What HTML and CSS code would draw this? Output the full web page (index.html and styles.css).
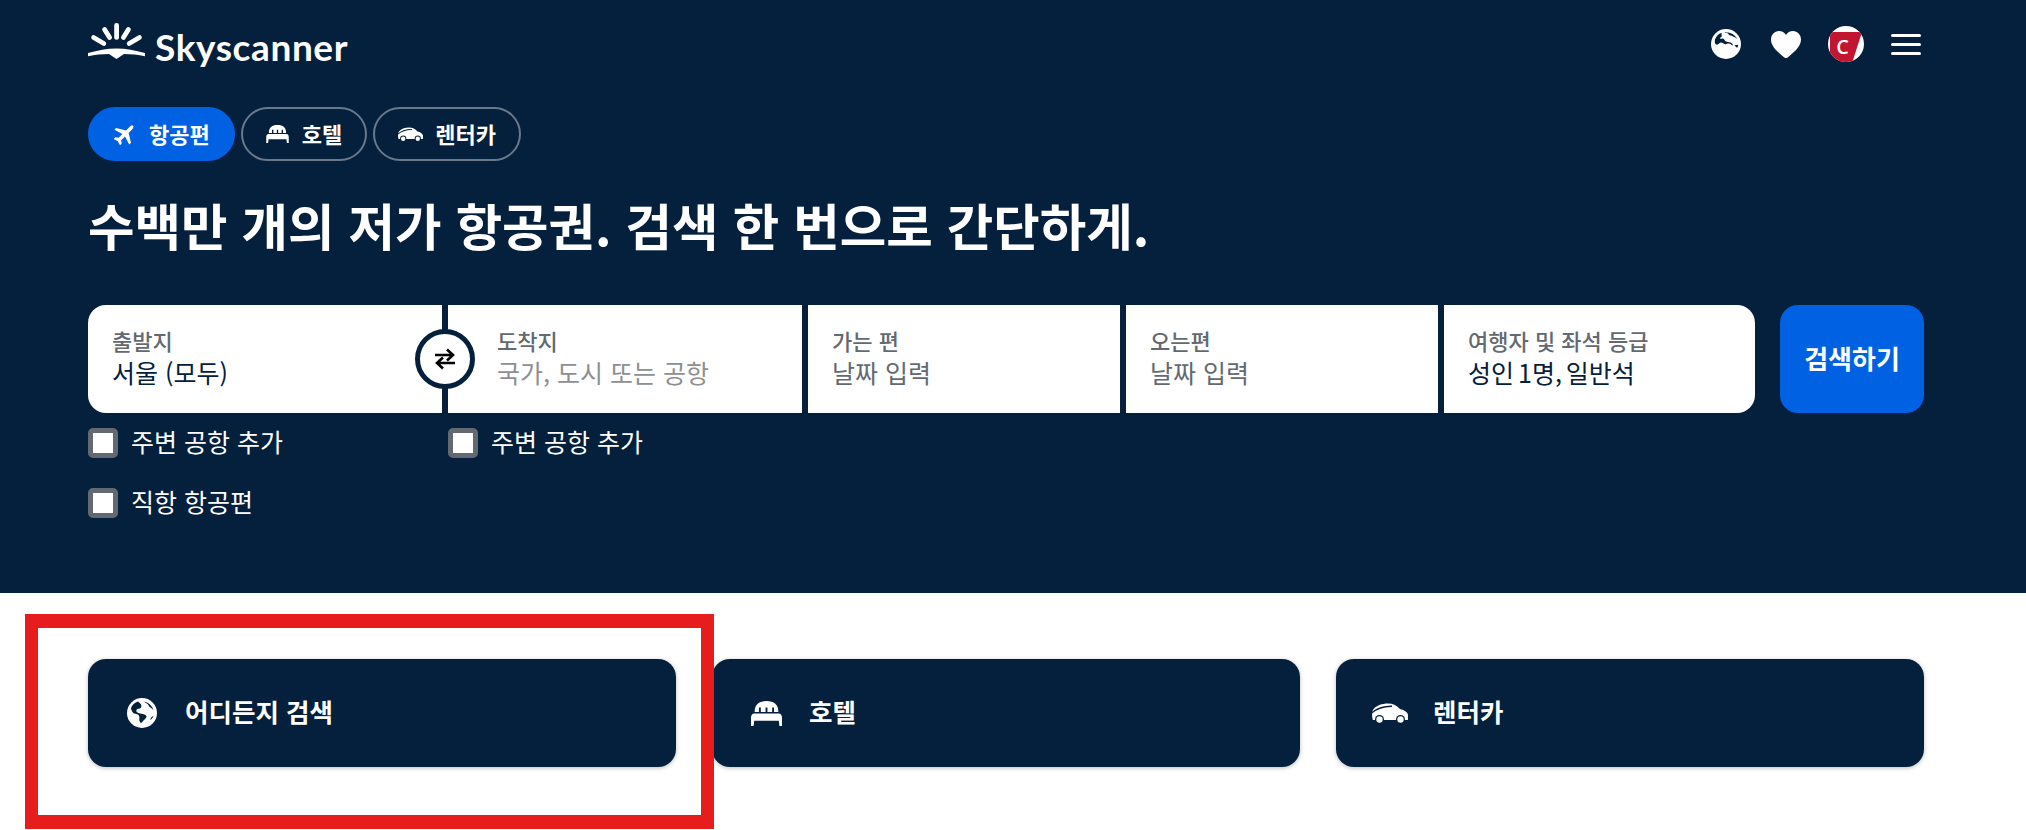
FILE: index.html
```html
<!DOCTYPE html>
<html lang="ko">
<head>
    <meta charset="utf-8">
    <title>Skyscanner</title>
    <link rel="stylesheet" href="styles.css">
</head>
<body>
    <svg class="defs" width="0" height="0" aria-hidden="true">
        <symbol id="globe" viewBox="0 0 30 30">
            <circle cx="15" cy="15" r="15" fill="#fff"/>
            <path fill="#05203c" d="M11 3.500c-3.200 1-6 3.600-7.200 7 .9 1.300 1 3 2.200 4.200 1.300 1.300 3.200 1 4.800 1.800 1.500.8 1.800 2.600 1.500 4.300-.3 1.600.5 3 1.500 4.200 1.600-.6 2.300-2.300 3.500-3.300 1.200-1 2.300-2 2.200-3.700-1-1.600-3.200-1.600-4.900-2.200-1.700-.6-3.500-.5-4.800-1.800-.8-.8-.4-2 .3-2.700 1-.9 2.300-.4 3.300-1 1.200-.7 1-2.300.8-3.500C13.800 5.500 12 4.700 11 3.500z"/>
            <path fill="#05203c" d="M17 3.400c1 .9 2.200 1.500 3.200 2.300 1.300 1 1.500 2.700 2.800 3.500 1.300.8 2.500 1.800 3.400 3C25.500 8 21.700 4.300 17 3.400zM26.500 18c-1 .2-1.800 1-2.500 1.800-.6.700-.4 1.800-.8 2.500 1.500-1.200 2.700-2.700 3.300-4.300z"/>
        </symbol>
        <symbol id="globe-top" viewBox="0 0 30 30">
            <circle cx="15" cy="15" r="15" fill="#fff"/>
            <path fill="#05203c" d="M10.500 3.800C6.500 5.300 3.800 9 3.800 13c0 1.800 1.200 3 2.800 2.600 1.500-.4 2-2 3.400-2 1.600 0 2.600 1.500 4.200 1.600 1.500.1 2.500-.9 4-.6 1.400.3 2.300 1.500 3.600 1.900.5-1.300-1-2.300-2.200-3-1.400-.8-3.200-.5-4.700-1.100-1.500-.6-1.500-2.300-3-2.800-1.400-.4-2.300.9-2.800-.3-.4-1.200 1.900-1 1.600-2.600-.1-1-.2-1.300 0-1.900zM13.500 3.200c1 .9 2.400.4 3.400 1.200.9.800 1.600 2 2.900 2.200 1.400.2 2.300 1.400 3.700 1.600 1.400.2 2.500 1.300 3.200 2.500C24.700 6 19.500 2.800 13.500 3.200z"/>
            <path fill="#05203c" d="M23.500 16.500c1.100.6 1.500 1.900 2.800 2.300.5-1 .8-2 .9-3-1.300.4-2.500-.2-3.700.7z"/>
        </symbol>
        <symbol id="bed" viewBox="0 0 30 24">
            <path fill="#fff" d="M3.500 10.500C3.500 3.500 7.500 0 15 0s11.500 3.500 11.500 10.500h-4.200V6.200h-1.800v4.300h-4.600V6.200h-1.800v4.300H9.500V6.200H7.700v4.300z"/>
            <path fill="#fff" d="M3 12h24c1.700 0 3 1.700 3 4v8h-2.500l-.6-5H3.100l-.6 5H0v-8c0-2.300 1.300-4 3-4z"/>
        </symbol>
        <symbol id="car" viewBox="0 0 36 21">
            <path fill="#fff" d="M.8 7C4 2.500 10 .5 16 .5c5 0 9 2 12 5.500 4 .9 7.500 2.800 8 6 .2 1.600.1 3.300-.2 5H.8C-.1 14 -.3 9.500.8 7z"/>
            <path fill="none" stroke="#05203c" stroke-width="1.500" d="M-1 10.500C4 6 11 3 20 3.200"/>
            <circle cx="7.500" cy="16.500" r="4.500" fill="#05203c"/>
            <circle cx="28.500" cy="16.500" r="4.500" fill="#05203c"/>
            <circle cx="7.500" cy="16.500" r="3.200" fill="#fff"/>
            <circle cx="28.500" cy="16.500" r="3.200" fill="#fff"/>
        </symbol>
        <symbol id="plane" viewBox="0 0 24 24">
            <path fill="#fff" transform="rotate(45 12 12)" d="M22.500 16.500v-2.500l-8.700-5.300V3.500C13.800 2.200 13 .5 12 .5s-1.800 1.700-1.800 3v5.200L1.500 14v2.500l8.700-2.700v5.400L7.500 21.200v2.300l4.500-1.300 4.500 1.300v-2.300l-2.700-2v-5.400z"/>
        </symbol>
    </svg>

    <header class="hero">
        <div class="topbar">
            <a class="logo" href="#">
                <svg class="logo-mark" viewBox="0 0 57 36">
                    <g stroke="#fff" stroke-width="4.800" stroke-linecap="round">
                        <path d="M28.600 2.400v12"/>
                        <path d="M16.600 6.500l5 8"/>
                        <path d="M40.400 6.500l-5 8"/>
                        <path d="M5.600 14.500l10.200 6"/>
                        <path d="M51.400 14.500l-10.200 6"/>
                    </g>
                    <path fill="#fff" d="M0 30c10-2.500 19-4.500 28.500-4.500S47 27.500 57 30v3.300c-7-1.400-14-2.300-21-2.300l-7.500 5-7.500-5c-7 0-14 .9-21 2.300z"/>
                </svg>
                <span class="logo-text">Skyscanner</span>
            </a>
            <nav class="top-icons">
                <svg class="top-globe"><use href="#globe-top"/></svg>
                <svg class="heart" viewBox="0 0 30 27"><path fill="#fff" d="M15 27c-1 0-2-.8-3.200-1.800C7 21 0 15.700 0 8.500 0 3.600 3.600 0 8 0c2.900 0 5.500 1.500 7 4 1.500-2.500 4.100-4 7-4 4.400 0 8 3.600 8 8.500 0 7.200-7 12.500-11.800 16.700C17 26.200 16 27 15 27z"/></svg>
                <span class="avatar"><span class="avatar-flag">C</span></span>
                <span class="menu"><i></i><i></i><i></i></span>
            </nav>
        </div>

        <div class="tabs">
            <a class="tab active" href="#"><svg class="tab-plane"><use href="#plane"/></svg><span class="tab-text">항공편</span></a>
            <a class="tab" href="#"><svg class="tab-bed"><use href="#bed"/></svg><span class="tab-text">호텔</span></a>
            <a class="tab" href="#"><svg class="tab-car"><use href="#car"/></svg><span class="tab-text">렌터카</span></a>
        </div>

        <h1>수백만 개의 저가 항공권. 검색 한 번으로 간단하게.</h1>

        <div class="search">
            <div class="fields">
                <div class="field origin">
                    <span class="label">출발지</span>
                    <span class="value">서울 (모두)</span>
                    <span class="swap">
                        <svg viewBox="0 0 24 24" width="24" height="24"><path fill="none" stroke="#000" stroke-width="2.600" d="M2 8h18M14 2.500L20 8l-6 5.500M22 16H4M10 10.500L4 16l6 5.500"/></svg>
                    </span>
                </div>
                <div class="field dest">
                    <span class="label">도착지</span>
                    <span class="value empty">국가, 도시 또는 공항</span>
                </div>
                <div class="field date">
                    <span class="label">가는 편</span>
                    <span class="value empty dark">날짜 입력</span>
                </div>
                <div class="field date">
                    <span class="label">오는편</span>
                    <span class="value empty dark">날짜 입력</span>
                </div>
                <div class="field people">
                    <span class="label">여행자 및 좌석 등급</span>
                    <span class="value">성인 1명, 일반석</span>
                </div>
            </div>
            <button class="search-btn"><span class="btn-text">검색하기</span></button>
        </div>

        <div class="options">
            <label class="check near"><span class="box"></span><span class="check-text">주변 공항 추가</span></label>
            <label class="check"><span class="box"></span><span class="check-text">주변 공항 추가</span></label>
        </div>
        <div class="options">
            <label class="check"><span class="box"></span><span class="check-text">직항 항공편</span></label>
        </div>
    </header>

    <section class="cards">
        <a class="card" href="#"><span class="card-icon"><svg class="card-globe"><use href="#globe"/></svg></span><span class="card-text">어디든지 검색</span></a>
        <a class="card" href="#"><span class="card-icon"><svg class="card-bed"><use href="#bed"/></svg></span><span class="card-text">호텔</span></a>
        <a class="card" href="#"><span class="card-icon"><svg class="card-car"><use href="#car"/></svg></span><span class="card-text">렌터카</span></a>
    </section>

    <div class="highlight"></div>
</body>
</html>
```

FILE: styles.css
```css
html, body {
    margin: 0;
    padding: 0;
    height: 830px;
    overflow: hidden;
}
body {
    position: relative;
    background: #fff;
    font-family: "Noto Sans CJK KR", "Noto Sans", sans-serif;
    color: #fff;
}
a {
    color: #fff;
    text-decoration: none;
}
.defs {
    position: absolute;
}

/* header */
.hero {
    box-sizing: border-box;
    height: 593px;
    padding: 0 102px 0 88px;
    background: #05203c;
}
.topbar {
    display: flex;
    align-items: center;
    justify-content: space-between;
    height: 107px;
}
.logo {
    display: flex;
    align-items: flex-start;
    gap: 10px;
    height: 42px;
    margin-top: -20px;
}
.logo-mark {
    width: 57px;
    height: 36px;
}
.logo-text {
    font-family: "Lato", sans-serif;
    font-size: 37px;
    font-weight: 700;
    line-height: 42px;
    letter-spacing: 0.6px;
    margin-top: 3px;
}
.top-icons {
    display: flex;
    align-items: center;
    margin-top: -19px;
    margin-right: 3px;
}
.top-globe {
    width: 30px;
    height: 30px;
}
.heart {
    width: 30px;
    height: 27px;
    margin-left: 30px;
}
.avatar {
    display: flex;
    align-items: flex-end;
    justify-content: center;
    width: 36px;
    height: 36px;
    margin-left: 27px;
    background: #fff;
    border-radius: 50%;
    overflow: hidden;
}
.avatar-flag {
    display: flex;
    align-items: center;
    justify-content: center;
    box-sizing: border-box;
    width: 32px;
    height: 30px;
    padding-right: 7px;
    background: #c2152f;
    clip-path: polygon(0 0, 100% 0, 70% 100%, 0 100%);
    font-family: "Open Sans", sans-serif;
    font-size: 20px;
    font-weight: 600;
    line-height: 1;
}
.menu {
    display: flex;
    flex-direction: column;
    gap: 6px;
    width: 30px;
    margin-left: 27px;
}
.menu i {
    height: 3px;
    background: #fff;
    border-radius: 2px;
}

/* tabs */
.tabs {
    display: flex;
    gap: 6px;
}
.tab {
    box-sizing: border-box;
    display: flex;
    align-items: center;
    height: 54px;
    padding: 0 23px 0 23px;
    border: 2px solid #69798a;
    border-radius: 27px;
    font-size: 22px;
    font-weight: 700;
}
.tab.active {
    background: #0062e3;
    border-color: #0062e3;
}
.tab svg {
    flex: none;
}
.tab-text {
    padding-bottom: 2px;
}
.tab-plane {
    width: 24px;
    height: 24px;
    margin-right: 12px;
}
.tab-bed {
    width: 23px;
    height: 18px;
    margin-right: 13px;
}
.tab-car {
    width: 25px;
    height: 15px;
    margin-right: 12px;
}

h1 {
    margin: 0;
    padding-top: 28px;
    font-size: 50.5px;
    font-weight: 700;
    line-height: 70px;
    white-space: nowrap;
}

/* search form */
.search {
    display: flex;
    gap: 25px;
    margin-right: -14px;
    margin-top: 46px;
    height: 108px;
}
.fields {
    display: flex;
    gap: 6px;
}
.field {
    position: relative;
    box-sizing: border-box;
    display: flex;
    flex-direction: column;
    justify-content: center;
    width: 312px;
    height: 108px;
    padding: 0 24px 3px;
    background: #fff;
}
.origin {
    width: 354px;
    border-radius: 18px 0 0 18px;
}
.dest {
    width: 354px;
    padding-left: 49px;
}
.people {
    width: 311px;
    border-radius: 0 18px 18px 0;
}
.people .value {
    word-spacing: -3px;
}
.label {
    font-size: 22px;
    font-weight: 500;
    line-height: 28px;
    color: #626971;
}
.value {
    font-size: 25px;
    line-height: 36px;
    color: #05203c;
    white-space: nowrap;
}
.value.empty {
    color: #8d8f92;
}
.value.dark {
    color: #626971;
}
.swap {
    position: absolute;
    top: 24px;
    right: -33px;
    z-index: 1;
    display: flex;
    align-items: center;
    justify-content: center;
    box-sizing: border-box;
    width: 60px;
    height: 60px;
    background: #fff;
    border: 5px solid #05203c;
    border-radius: 50%;
}
.search-btn {
    width: 144px;
    height: 108px;
    padding: 0;
    background: #0062e3;
    color: #fff;
    border: none;
    border-radius: 18px;
    font-family: inherit;
    font-size: 26px;
    font-weight: 700;
}
.btn-text {
    display: block;
    padding-bottom: 4px;
}

/* checkboxes */
.options {
    display: flex;
    height: 30px;
    margin-top: 15px;
}
.options + .options {
    margin-top: 30px;
}
.check {
    display: flex;
    align-items: center;
    gap: 13px;
    font-size: 25px;
    line-height: 30px;
}
.check-text {
    padding-bottom: 5px;
}
.check.near {
    width: 360px;
}
.box {
    box-sizing: border-box;
    width: 30px;
    height: 30px;
    background: #fff;
    border: 5px solid #626971;
    border-radius: 5px;
}

/* bottom cards */
.cards {
    display: flex;
    gap: 36px;
    padding: 66px 102px 0 88px;
}
.card {
    display: flex;
    align-items: center;
    flex: 1;
    height: 108px;
    padding-left: 36px;
    background: #05203c;
    border-radius: 18px;
    box-shadow: 0 1px 4px rgba(37, 32, 31, .3);
    font-size: 25.5px;
    font-weight: 700;
}
.card-icon {
    display: flex;
    justify-content: center;
    width: 36px;
    margin-right: 25px;
}
.card-text {
    padding-bottom: 5px;
}
.card-globe {
    width: 30px;
    height: 30px;
}
.card-bed {
    width: 31px;
    height: 25px;
}
.card-car {
    width: 36px;
    height: 21px;
}

/* red marker drawn over the page */
.highlight {
    position: absolute;
    left: 25px;
    top: 614px;
    box-sizing: border-box;
    width: 689px;
    height: 215px;
    border: solid #e71d1d;
    border-width: 14px 13px;
}
```
